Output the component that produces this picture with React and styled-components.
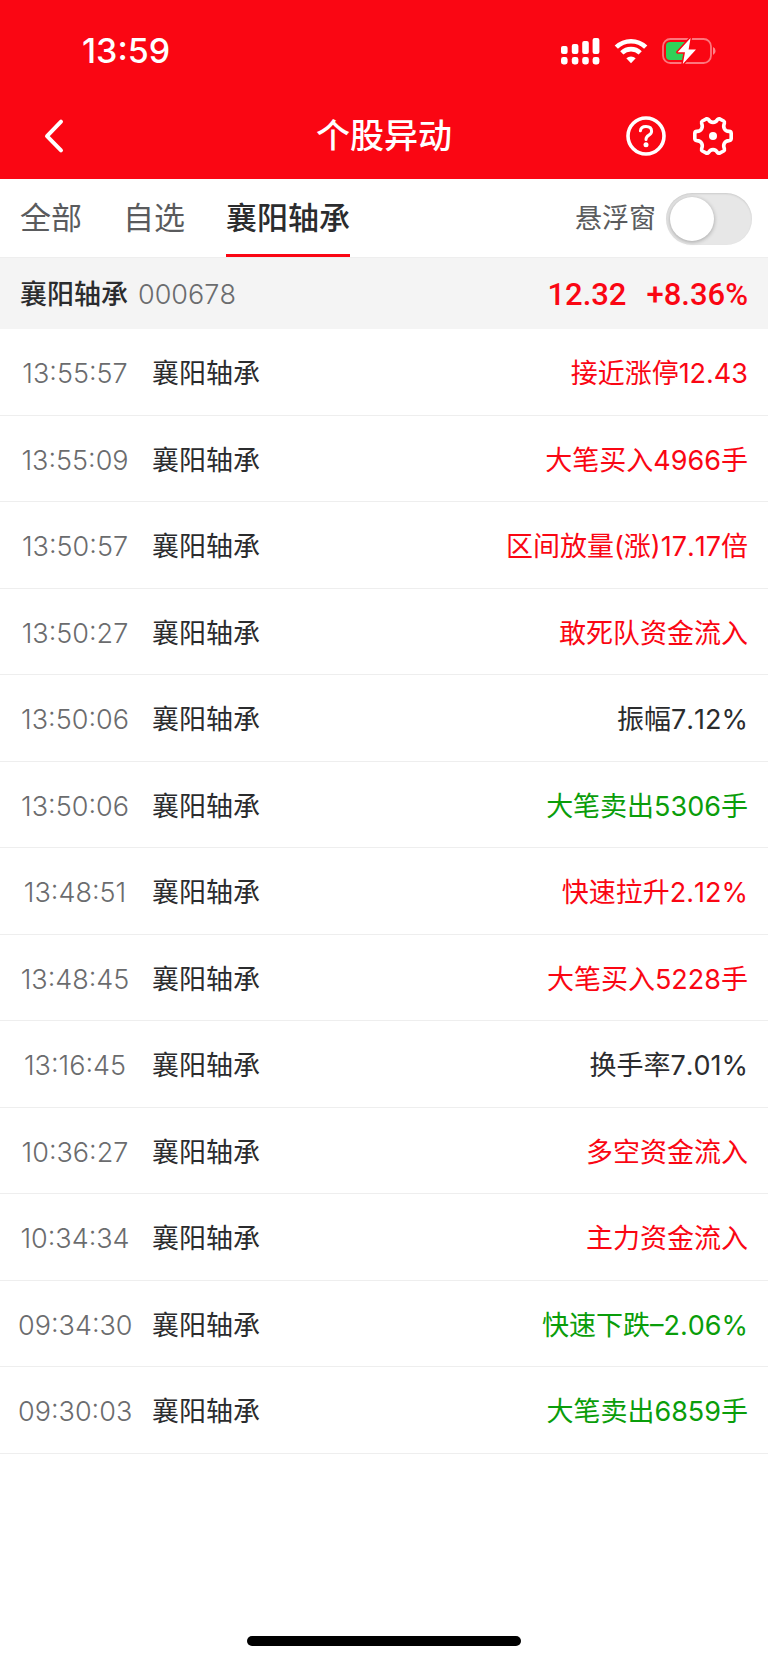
import React, { useState } from "react";
import styled, { createGlobalStyle } from "styled-components";

const STOCK = "襄阳轴承";

const TABS = ["全部", "自选", STOCK];

const EVENTS = [
  { time: "13:55:57", text: "接近涨停12.43", type: "up" },
  { time: "13:55:09", text: "大笔买入4966手", type: "up" },
  { time: "13:50:57", text: "区间放量(涨)17.17倍", type: "up" },
  { time: "13:50:27", text: "敢死队资金流入", type: "up" },
  { time: "13:50:06", text: "振幅7.12%", type: "flat" },
  { time: "13:50:06", text: "大笔卖出5306手", type: "down" },
  { time: "13:48:51", text: "快速拉升2.12%", type: "up" },
  { time: "13:48:45", text: "大笔买入5228手", type: "up" },
  { time: "13:16:45", text: "换手率7.01%", type: "flat" },
  { time: "10:36:27", text: "多空资金流入", type: "up" },
  { time: "10:34:34", text: "主力资金流入", type: "up" },
  { time: "09:34:30", text: "快速下跌–2.06%", type: "down" },
  { time: "09:30:03", text: "大笔卖出6859手", type: "down" },
];

const COLORS = {
  up: "#fa0613",
  down: "#0a9d0a",
  flat: "#2b2c2e",
};

function SignalIcon() {
  return (
    <svg width="40" height="28" viewBox="0 0 40 28" fill="#fff" aria-hidden="true">
      <rect x="1" y="9" width="6.6" height="8" rx="2" />
      <rect x="11.8" y="7" width="6.6" height="10" rx="2" />
      <rect x="22.2" y="4" width="6.6" height="13" rx="2" />
      <rect x="32.6" y="1" width="6.8" height="16" rx="2" />
      <rect x="1" y="20" width="6.6" height="7.4" rx="2.4" />
      <rect x="11.8" y="20" width="6.6" height="7.4" rx="2.4" />
      <rect x="22.2" y="20" width="6.6" height="7.4" rx="2.4" />
      <rect x="32.6" y="20" width="6.8" height="7.4" rx="2.4" />
    </svg>
  );
}

function WifiIcon() {
  return (
    <svg width="34" height="26" viewBox="0 0 34 26" fill="none" stroke="#fff" strokeWidth="4.6" aria-hidden="true">
      <path d="M2.3 9.2 A21 21 0 0 1 31.7 9.2" />
      <path d="M7.8 14.8 A13.3 13.3 0 0 1 26.2 14.8" />
      <path d="M12.3 20.2 A7 7 0 0 1 21.7 20.2 L17 25.2 Z" fill="#fff" stroke="none" />
    </svg>
  );
}

function BatteryIcon() {
  return (
    <svg width="54" height="28" viewBox="0 0 54 28" fill="none" aria-hidden="true">
      <rect x="1" y="2" width="48" height="24" rx="7.5" stroke="#fff" strokeOpacity=".45" strokeWidth="1.8" />
      <path d="M51 10 Q53.6 11.2 53.6 14 Q53.6 16.8 51 18 Z" fill="#fff" fillOpacity=".5" />
      <path d="M8 5 H24 V23 H8 Q4 23 4 19 V9 Q4 5 8 5 Z" fill="#30d158" />
      <path
        d="M28.6 1 L15.6 15.2 H23 L20.8 27 L34 12.4 H26.6 Z"
        fill="#fff"
        stroke="#fa0613"
        strokeWidth="3"
        strokeLinejoin="round"
        paintOrder="stroke"
      />
    </svg>
  );
}

function BackIcon() {
  return (
    <svg width="22" height="36" viewBox="0 0 22 36" fill="none" stroke="#fff" strokeWidth="4" strokeLinecap="round" strokeLinejoin="round" aria-hidden="true">
      <path d="M18 3.6 L4 18.2 L18 32.4" />
    </svg>
  );
}

function HelpIcon() {
  return (
    <svg width="40" height="40" viewBox="0 0 40 40" fill="none" stroke="#fff" strokeLinecap="round" strokeLinejoin="round" aria-hidden="true">
      <circle cx="20" cy="20" r="18" strokeWidth="3.6" />
      <path d="M14.4 14.8 Q14.8 10.4 20 10.4 Q25.6 10.4 25.6 15.2 Q25.6 17.6 22.6 19.4 Q20 21 20 23.6" strokeWidth="3" />
      <circle cx="20" cy="28.8" r="2.5" fill="#fff" stroke="none" />
    </svg>
  );
}

function GearIcon() {
  return (
    <svg width="40" height="40" viewBox="0 0 40 40" fill="none" stroke="#fff" strokeWidth="3.6" strokeLinejoin="round" aria-hidden="true">
      <path d="M13.4 2.8 Q14.8 2.4 15.6 3.6 Q17 6.4 20 6.4 Q23 6.4 24.4 3.6 Q25.2 2.4 26.6 2.8 L30.6 5 Q31.8 5.8 31.4 7.2 Q30 10.2 31.4 12.8 Q32.8 15.2 36 15.4 Q38.2 15.6 38.2 17.4 V22.6 Q38.2 24.4 36 24.6 Q32.8 24.8 31.4 27.2 Q30 29.8 31.4 32.8 Q31.8 34.2 30.6 35 L26.6 37.2 Q25.2 37.6 24.4 36.4 Q23 33.6 20 33.6 Q17 33.6 15.6 36.4 Q14.8 37.6 13.4 37.2 L9.4 35 Q8.2 34.2 8.6 32.8 Q10 29.8 8.6 27.2 Q7.2 24.8 4 24.6 Q1.8 24.4 1.8 22.6 V17.4 Q1.8 15.6 4 15.4 Q7.2 15.2 8.6 12.8 Q10 10.2 8.6 7.2 Q8.2 5.8 9.4 5 Z" />
      <circle cx="20" cy="20" r="4" fill="#fff" stroke="none" />
    </svg>
  );
}

function App() {
  const [active, setActive] = useState(STOCK);
  const [floating, setFloating] = useState(false);

  return (
    <Page>
      <GlobalStyle />
      <Header>
        <StatusBar>
          <Clock>13:59</Clock>
          <StatusIcons>
            <SignalIcon />
            <WifiIcon />
            <BatteryIcon />
          </StatusIcons>
        </StatusBar>
        <NavBar>
          <BackButton type="button" aria-label="返回">
            <BackIcon />
          </BackButton>
          <Title>个股异动</Title>
          <Actions>
            <button type="button" aria-label="帮助">
              <HelpIcon />
            </button>
            <button type="button" aria-label="设置">
              <GearIcon />
            </button>
          </Actions>
        </NavBar>
      </Header>

      <TabBar>
        <Tabs>
          {TABS.map((tab) => (
            <Tab key={tab} type="button" $active={tab === active} onClick={() => setActive(tab)}>
              {tab}
            </Tab>
          ))}
        </Tabs>
        <FloatLabel>
          悬浮窗
          <Switch
            type="checkbox"
            role="switch"
            checked={floating}
            onChange={(e) => setFloating(e.target.checked)}
          />
        </FloatLabel>
      </TabBar>

      <Quote>
        <QuoteName>{STOCK}</QuoteName>
        <QuoteCode>000678</QuoteCode>
        <QuotePrice>12.32</QuotePrice>
        <QuotePrice>+8.36%</QuotePrice>
      </Quote>

      <EventList>
        {EVENTS.map((event, idx) => (
          <EventRow key={idx}>
            <EventTime>{event.time}</EventTime>
            <span>{STOCK}</span>
            <EventText $type={event.type}>{event.text}</EventText>
          </EventRow>
        ))}
      </EventList>

      <HomeBar />
    </Page>
  );
}

export default App;

const GlobalStyle = createGlobalStyle`
  * {
    box-sizing: border-box;
  }

  body {
    margin: 0;
    background: #ffffff;
  }

  button {
    padding: 0;
    border: none;
    background: none;
    font: inherit;
    color: inherit;
    cursor: pointer;
  }

  svg {
    display: block;
  }
`;

const Page = styled.div`
  display: flex;
  flex-direction: column;
  min-height: 100vh;
  font-family: Inter, "Noto Sans CJK SC", sans-serif;
  font-size: 27px;
  font-kerning: none;
  line-height: 36px;
  color: #2b2c2e;
`;

const Header = styled.header`
  color: #ffffff;
  background: #fa0613;
`;

const StatusBar = styled.div`
  display: flex;
  align-items: center;
  justify-content: space-between;
  height: 94px;
  padding: 8px 52px 0 82px;
`;

const Clock = styled.span`
  font-size: 34px;
  font-weight: 500;
`;

const StatusIcons = styled.div`
  display: flex;
  align-items: center;
  gap: 14px;
`;

const NavBar = styled.div`
  display: grid;
  grid-template-columns: 1fr auto 1fr;
  align-items: center;
  height: 85px;
  padding: 0 35px 2px;
`;

const BackButton = styled.button`
  && {
    justify-self: start;
    padding-left: 8px;
  }
`;

const Title = styled.h1`
  margin: 0;
  font-size: 34px;
  font-weight: 500;
`;

const Actions = styled.div`
  display: flex;
  justify-content: flex-end;
  gap: 27px;
`;

const TabBar = styled.nav`
  display: flex;
  justify-content: space-between;
  height: 79px;
  padding: 0 16px 0 20px;
  border-bottom: 1px solid #eeeeee;
`;

const Tabs = styled.div`
  display: flex;
  gap: 41px;
`;

const Tab = styled.button`
  && {
    border-top: 3px solid transparent;
    border-bottom: 3px solid ${({ $active }) => ($active ? "#fa0613" : "transparent")};
    font-size: 31px;
    font-weight: ${({ $active }) => ($active ? 500 : 400)};
    color: ${({ $active }) => ($active ? "#2b2c2e" : "#5a5b5d")};
  }
`;

const FloatLabel = styled.label`
  display: flex;
  align-items: center;
  gap: 10px;
  padding-top: 2px;
  color: #5a5b5d;
`;

const Switch = styled.input`
  display: flex;
  align-items: center;
  width: 86px;
  height: 52px;
  margin: 0;
  padding: 0 4px;
  border-radius: 26px;
  appearance: none;
  background: ${({ checked }) => (checked ? "#fa0613" : "#e7e7e7")};
  box-shadow: inset 0 1px 2px rgba(0, 0, 0, 0.12);
  cursor: pointer;

  &::before {
    content: "";
    width: 44px;
    height: 44px;
    margin-left: ${({ checked }) => (checked ? "auto" : "0")};
    border-radius: 50%;
    background: #ffffff;
    box-shadow: 0 1px 4px rgba(0, 0, 0, 0.3);
  }
`;

const Quote = styled.section`
  display: flex;
  align-items: center;
  height: 71px;
  padding: 2px 20px 0;
  background: #f4f4f4;
`;

const QuoteName = styled.strong`
  font-weight: 500;
`;

const QuoteCode = styled.span`
  flex: 1;
  margin-left: 10px;
  font-weight: 300;
  color: #6b6c6e;
`;

const QuotePrice = styled.span`
  margin-left: 20px;
  font-family: Roboto, sans-serif;
  font-size: 31px;
  font-weight: 500;
  color: #fa0613;
`;

const EventList = styled.ul`
  margin: 0;
  padding: 0;
  list-style: none;
`;

const EventRow = styled.li`
  display: flex;
  align-items: center;
  height: 87px;
  padding: 4px 20px 0 18px;
  border-bottom: 1px solid #eeeeee;

  &:nth-child(even) {
    height: 86px;
  }
`;

const EventTime = styled.time`
  width: 114px;
  margin-right: 20px;
  text-align: center;
  white-space: nowrap;
  font-weight: 300;
  color: #6b6c6e;
`;

const EventText = styled.span`
  margin-left: auto;
  color: ${({ $type }) => COLORS[$type]};
`;

const HomeBar = styled.div`
  width: 274px;
  height: 10px;
  margin: auto auto 17px;
  border-radius: 5px;
  background: #000000;
`;
